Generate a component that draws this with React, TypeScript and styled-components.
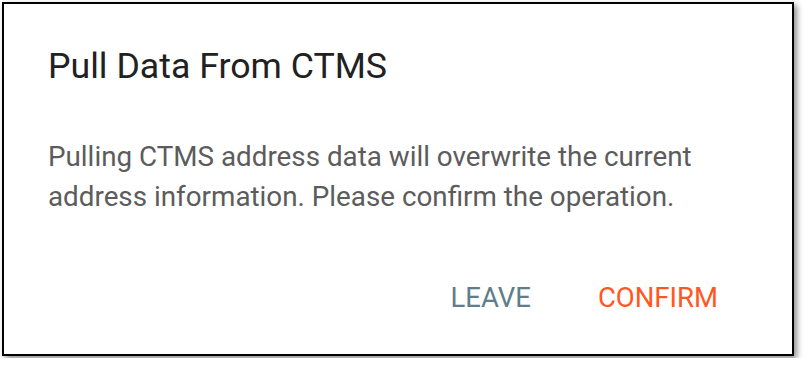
import React from 'react';
import styled, { createGlobalStyle } from 'styled-components';

const GlobalStyle = createGlobalStyle`
    html, body {
        margin: 0;
        padding: 0;
        background: #ffffff;
    }

    body {
        font-family: Roboto, "Noto Sans", "Liberation Sans", sans-serif;
    }

    #root {
        padding: 2px;
    }
`;

const Dialog = styled.div`
    box-sizing: border-box;
    width: 792px;
    height: 354px;
    border: 2px solid #000000;
    background: #ffffff;
    box-shadow: 3px 3px 6px rgba(0, 0, 0, 0.45);
    padding: 40px 46px 0 44px;
    display: flex;
    flex-direction: column;
`;

const Title = styled.h2`
    margin: 0;
    font-size: 35.7px;
    line-height: 44px;
    font-weight: 400;
    color: #212121;
`;

const Message = styled.p`
    margin: 49px 0 0 0;
    font-size: 27.8px;
    line-height: 40px;
    font-weight: 400;
    color: #5c5c5c;
`;

const Actions = styled.div`
    display: flex;
    justify-content: flex-end;
    gap: 51px;
    margin: 63px 20px 0 0;
`;

const Button = styled.button<{ $tone: string }>`
    border: none;
    background: transparent;
    padding: 0 8px;
    font-family: inherit;
    font-size: 27.5px;
    line-height: 36px;
    font-weight: 400;
    text-transform: uppercase;
    color: ${({ $tone }) => $tone};
    cursor: pointer;
`;

export default function App() {
    return (
        <>
            <GlobalStyle />
            <Dialog>
                <Title>Pull Data From CTMS</Title>
                <Message>
                    Pulling CTMS address data will overwrite the current
                    <br />
                    address information. Please confirm the operation.
                </Message>
                <Actions>
                    <Button $tone="#607d8b">Leave</Button>
                    <Button $tone="#ff5722">Confirm</Button>
                </Actions>
            </Dialog>
        </>
    );
}
